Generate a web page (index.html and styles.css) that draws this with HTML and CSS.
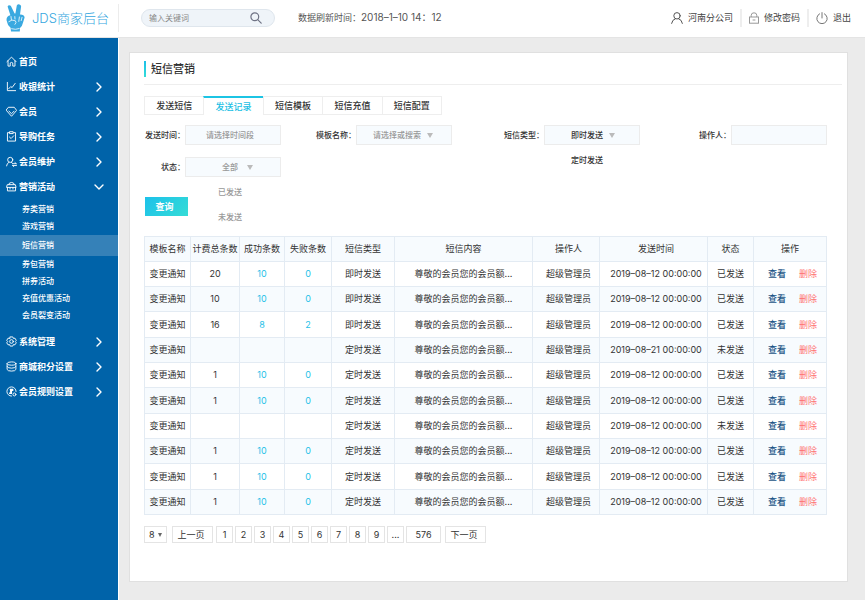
FILE: index.html
```
<!DOCTYPE html>
<html lang="zh-CN">
<head>
    <meta charset="UTF-8">
    <meta name="viewport" content="width=device-width, initial-scale=1.0">
    <title>JDS商家后台 - 短信营销</title>
    <link rel="stylesheet" href="styles.css">
</head>
<body>
    <header class="topbar">
        <a href="#" class="logo">
            <svg width="20" height="28" viewBox="0 0 20 28">
                <path fill="#3aa9e0" d="M1.6 2.6 Q2.6 .2 4.8 1.8 L8.6 9.6 L9.4 9.6 L10.8 1.6 Q12 -.6 14.4 .9 Q15.4 1.8 15 3.2 L14 10.6 Q18 10.4 18.6 13.4 L17.2 18 Q16.4 22 14 24 L13.8 27.4 L5 27.4 L4.6 23.8 Q1.2 21 .6 16.6 Q0 12.2 4.4 11.2 Z"/>
                <path fill="none" stroke="#fff" stroke-width=".8" stroke-linecap="round" d="M5 12.5 L5.4 15.6 M8.8 12.6 L9 15 M2.8 17.6 Q6 14.8 9.4 16.8 Q11 18.4 9 20.4 M13.4 13 L12.8 17.4 M16 13.4 L15.2 16.6 M5.6 24.8 Q9.6 26 13.2 24.6"/>
            </svg>
            <span>JDS商家后台</span>
        </a>
        <form class="search">
            <input type="search" aria-label="搜索" placeholder="输入关键词">
            <button type="button" aria-label="搜索">
                <svg width="12" height="12" viewBox="0 0 12 12" fill="none" stroke="#6f7385" stroke-width="1.2" stroke-linecap="round">
                    <circle cx="4.8" cy="4.8" r="3.9"/>
                    <path d="M7.7 7.7 L11.2 11.2"/>
                </svg>
            </button>
        </form>
        <div class="refresh-time">数据刷新时间：<span>2018–1–10 14：12</span></div>
        <nav class="user-menu">
            <a href="#">
                <svg width="12" height="12" viewBox="0 0 12 12" fill="none" stroke="#555" stroke-width="1" stroke-linecap="round">
                    <circle cx="6" cy="3.8" r="3.2"/>
                    <path d="M.6 11.4 Q1.2 7.6 4.4 6.7 M7.6 6.7 Q10.8 7.6 11.4 11.4"/>
                </svg>
                河南分公司
            </a>
            <a href="#">
                <svg width="10" height="12" viewBox="0 0 10 12" fill="none" stroke="#999" stroke-width="1">
                    <rect x=".5" y="5" width="9" height="6.2"/>
                    <path d="M2.2 5 V3.4 Q2.2 .8 5 .8 Q7.8 .8 7.8 3.4 V5 M3.6 8 H6.4"/>
                </svg>
                修改密码
            </a>
            <a href="#">
                <svg width="12" height="12" viewBox="0 0 12 12" fill="none" stroke="#777" stroke-width="1" stroke-linecap="round">
                    <path d="M3.6 1.8 A5.2 5.2 0 1 0 8.4 1.8 M6 .6 V6"/>
                </svg>
                退出
            </a>
        </nav>
    </header>

    <div class="layout">
        <aside class="sidebar">
            <nav>
                <a href="#" class="nav-item">
                    <svg class="icon" viewBox="0 0 12 12"><path d="M1 6.2 L6 1.2 L11 6.2 M2.2 5.2 V11 H4.6 V7.6 Q6 6.4 7.4 7.6 V11 H9.8 V5.2"/></svg>
                    首页
                </a>
                <a href="#" class="nav-item">
                    <svg class="icon" viewBox="0 0 12 12"><path d="M1.5 1.5 V10.5 H10.5 M3 8.4 L5.2 6 L6.6 7.2 L10 2.6"/></svg>
                    收银统计
                    <svg class="arrow" viewBox="0 0 10 10"><path d="M3 1 L7 5 L3 9"/></svg>
                </a>
                <a href="#" class="nav-item">
                    <svg class="icon" viewBox="0 0 12 12"><path d="M3 1.4 H9 L11.6 4.8 L6 11.2 L.4 4.8 Z M3.2 5.6 L6 8.4 L8.8 5.6"/></svg>
                    会员
                    <svg class="arrow" viewBox="0 0 10 10"><path d="M3 1 L7 5 L3 9"/></svg>
                </a>
                <a href="#" class="nav-item">
                    <svg class="icon" viewBox="0 0 12 12"><path d="M3.6 1.8 H1.6 V11 H10.4 V1.8 H8.4 M4.2 .8 H7.8 V2.8 H4.2 Z M3.8 6.6 L5.6 8.2 L8.4 5.2"/></svg>
                    导购任务
                    <svg class="arrow" viewBox="0 0 10 10"><path d="M3 1 L7 5 L3 9"/></svg>
                </a>
                <a href="#" class="nav-item">
                    <svg class="icon" viewBox="0 0 12 12"><circle cx="4.6" cy="4.2" r="2.8"/><path d="M.6 10.8 Q1 7.8 3.2 6.8 M5.8 6.8 L6.8 7.6 M11 8.4 H7 M11.4 10.4 H7.4 M9.8 7.2 L11.2 8.4 M8.6 11.6 L7.2 10.4"/></svg>
                    会员维护
                    <svg class="arrow" viewBox="0 0 10 10"><path d="M3 1 L7 5 L3 9"/></svg>
                </a>
                <a href="#" class="nav-item">
                    <svg class="icon" viewBox="0 0 12 12"><path d="M3 4 Q3 1.6 6 1.6 Q9 1.6 9 4 M1.8 4 H10.2 L11 7 H1 Z M1.6 7 V10.8 H10.4 V7 M4.4 7 V8.8 M7.6 7 V8.8"/></svg>
                    营销活动
                    <svg class="arrow" viewBox="0 0 10 10"><path d="M1 3 L5 7 L9 3"/></svg>
                </a>
                <div class="submenu">
                    <a href="#">券类营销</a>
                    <a href="#">游戏营销</a>
                    <a href="#" class="active">短信营销</a>
                    <a href="#">券包营销</a>
                    <a href="#">拼券活动</a>
                    <a href="#">充值优惠活动</a>
                    <a href="#">会员裂变活动</a>
                </div>
                <a href="#" class="nav-item">
                    <svg class="icon" viewBox="0 0 12 12"><path d="M4.6 1 H7.4 L8 2.6 L9.8 2.4 L11.2 4.8 L10.2 6 L11.2 7.4 L9.8 9.6 L8 9.4 L7.4 11 H4.6 L4 9.4 L2.2 9.6 L.8 7.4 L1.8 6 L.8 4.8 L2.2 2.4 L4 2.6 Z"/><circle cx="6" cy="6" r="2"/></svg>
                    系统管理
                    <svg class="arrow" viewBox="0 0 10 10"><path d="M3 1 L7 5 L3 9"/></svg>
                </a>
                <a href="#" class="nav-item">
                    <svg class="icon" viewBox="0 0 12 12"><ellipse cx="6" cy="2.8" rx="4.8" ry="1.8"/><path d="M1.2 2.8 V9.2 Q1.6 11 6 11 Q10.4 11 10.8 9.2 V2.8 M1.2 6 Q1.6 7.8 6 7.8 Q10.4 7.8 10.8 6"/></svg>
                    商城积分设置
                    <svg class="arrow" viewBox="0 0 10 10"><path d="M3 1 L7 5 L3 9"/></svg>
                </a>
                <a href="#" class="nav-item">
                    <svg class="icon" viewBox="0 0 12 12"><path d="M11 6 A5 5 0 1 0 6 11"/><path class="solid" d="M4 3 H8 V5.4 H6.6 V8.6 H3.4 V7 H4.6 Z"/><circle cx="9.2" cy="9.2" r="1.6"/></svg>
                    会员规则设置
                    <svg class="arrow" viewBox="0 0 10 10"><path d="M3 1 L7 5 L3 9"/></svg>
                </a>
            </nav>
        </aside>

        <main class="main">
            <section class="card">
                <h1>短信营销</h1>

                <nav class="tabs">
                    <a href="#">发送短信</a>
                    <a href="#" class="active">发送记录</a>
                    <a href="#">短信模板</a>
                    <a href="#">短信充值</a>
                    <a href="#">短信配置</a>
                </nav>

                <form class="filters">
                    <div class="field">
                        <label for="sendTime">发送时间：</label>
                        <input type="text" id="sendTime" class="control" placeholder="请选择时间段">
                    </div>
                    <div class="field">
                        <label for="template">模板名称：</label>
                        <div class="select select-search">
                            <select id="template" class="control"><option>请选择或搜索</option></select>
                        </div>
                    </div>
                    <div class="field">
                        <label for="smsType">短信类型：</label>
                        <div class="select select-type">
                            <select id="smsType" class="control"><option>即时发送</option></select>
                            <ul class="options"><li>定时发送</li></ul>
                        </div>
                    </div>
                    <div class="field">
                        <label for="operator">操作人：</label>
                        <input type="text" id="operator" class="control">
                    </div>
                    <div class="field">
                        <label for="status">状态：</label>
                        <div class="select select-status">
                            <select id="status" class="control"><option>全部</option></select>
                            <ul class="options"><li>已发送</li><li>未发送</li></ul>
                        </div>
                    </div>
                </form>
                <button type="button" class="query-btn">查询</button>

                <table class="records">
                    <colgroup>
                        <col class="col-name">
                        <col class="col-total">
                        <col class="col-ok">
                        <col class="col-fail">
                        <col class="col-type">
                        <col class="col-content">
                        <col class="col-operator">
                        <col class="col-time">
                        <col class="col-status">
                        <col class="col-action">
                    </colgroup>
                    <thead>
                        <tr><th>模板名称</th><th>计费总条数</th><th>成功条数</th><th>失败条数</th><th>短信类型</th><th>短信内容</th><th class="operator">操作人</th><th class="time">发送时间</th><th>状态</th><th>操作</th></tr>
                    </thead>
                    <tbody>
                        <tr><td>变更通知</td><td>20</td><td class="num">10</td><td class="num">0</td><td>即时发送</td><td>尊敬的会员您的会员额...</td><td class="operator">超级管理员</td><td class="time">2019–08–12 00:00:00</td><td>已发送</td><td class="action"><a href="#" class="view">查看</a><a href="#" class="delete">删除</a></td></tr>
                        <tr><td>变更通知</td><td>10</td><td class="num">10</td><td class="num">0</td><td>即时发送</td><td>尊敬的会员您的会员额...</td><td class="operator">超级管理员</td><td class="time">2019–08–12 00:00:00</td><td>已发送</td><td class="action"><a href="#" class="view">查看</a><a href="#" class="delete">删除</a></td></tr>
                        <tr><td>变更通知</td><td>16</td><td class="num">8</td><td class="num">2</td><td>即时发送</td><td>尊敬的会员您的会员额...</td><td class="operator">超级管理员</td><td class="time">2019–08–12 00:00:00</td><td>已发送</td><td class="action"><a href="#" class="view">查看</a><a href="#" class="delete">删除</a></td></tr>
                        <tr><td>变更通知</td><td></td><td></td><td></td><td>定时发送</td><td>尊敬的会员您的会员额...</td><td class="operator">超级管理员</td><td class="time">2019–08–21 00:00:00</td><td>未发送</td><td class="action"><a href="#" class="view">查看</a><a href="#" class="delete">删除</a></td></tr>
                        <tr><td>变更通知</td><td>1</td><td class="num">10</td><td class="num">0</td><td>定时发送</td><td>尊敬的会员您的会员额...</td><td class="operator">超级管理员</td><td class="time">2019–08–12 00:00:00</td><td>已发送</td><td class="action"><a href="#" class="view">查看</a><a href="#" class="delete">删除</a></td></tr>
                        <tr><td>变更通知</td><td>1</td><td class="num">10</td><td class="num">0</td><td>定时发送</td><td>尊敬的会员您的会员额...</td><td class="operator">超级管理员</td><td class="time">2019–08–12 00:00:00</td><td>已发送</td><td class="action"><a href="#" class="view">查看</a><a href="#" class="delete">删除</a></td></tr>
                        <tr><td>变更通知</td><td></td><td></td><td></td><td>定时发送</td><td>尊敬的会员您的会员额...</td><td class="operator">超级管理员</td><td class="time">2019–08–12 00:00:00</td><td>未发送</td><td class="action"><a href="#" class="view">查看</a><a href="#" class="delete">删除</a></td></tr>
                        <tr><td>变更通知</td><td>1</td><td class="num">10</td><td class="num">0</td><td>定时发送</td><td>尊敬的会员您的会员额...</td><td class="operator">超级管理员</td><td class="time">2019–08–12 00:00:00</td><td>已发送</td><td class="action"><a href="#" class="view">查看</a><a href="#" class="delete">删除</a></td></tr>
                        <tr><td>变更通知</td><td>1</td><td class="num">10</td><td class="num">0</td><td>定时发送</td><td>尊敬的会员您的会员额...</td><td class="operator">超级管理员</td><td class="time">2019–08–12 00:00:00</td><td>已发送</td><td class="action"><a href="#" class="view">查看</a><a href="#" class="delete">删除</a></td></tr>
                        <tr><td>变更通知</td><td>1</td><td class="num">10</td><td class="num">0</td><td>定时发送</td><td>尊敬的会员您的会员额...</td><td class="operator">超级管理员</td><td class="time">2019–08–12 00:00:00</td><td>已发送</td><td class="action"><a href="#" class="view">查看</a><a href="#" class="delete">删除</a></td></tr>
                    </tbody>
                </table>

                <div class="pager">
                    <div class="select page-size">
                        <select aria-label="每页条数"><option>8</option></select>
                    </div>
                    <button type="button" class="wide">上一页</button>
                    <button type="button">1</button>
                    <button type="button">2</button>
                    <button type="button">3</button>
                    <button type="button">4</button>
                    <button type="button">5</button>
                    <button type="button">6</button>
                    <button type="button">7</button>
                    <button type="button">8</button>
                    <button type="button">9</button>
                    <button type="button">...</button>
                    <button type="button" class="last">576</button>
                    <button type="button" class="wide">下一页</button>
                </div>
            </section>
        </main>
    </div>
</body>
</html>
```
FILE: styles.css
```
* {
    box-sizing: border-box;
}

body {
    margin: 0;
    min-height: 100vh;
    display: flex;
    flex-direction: column;
    font-family: Inter, "Noto Sans CJK SC", sans-serif;
    font-size: 9px;
    line-height: 14px;
    color: #333;
    background: #fff;
}

a {
    color: inherit;
    text-decoration: none;
}

input,
select,
button {
    font: inherit;
    color: inherit;
    margin: 0;
    padding: 0;
    border: 0;
    background: none;
}

svg {
    flex: none;
}

/* top bar */
.topbar {
    display: flex;
    align-items: center;
    height: 38px;
    padding: 0 14px 2px 0;
    border-bottom: 1px solid #e4e4e4;
}

.logo {
    display: flex;
    align-items: center;
    gap: 6px;
    width: 119px;
    height: 28px;
    padding-left: 6px;
    border-right: 1px solid #ececec;
    font-size: 13px;
    font-weight: 300;
    white-space: nowrap;
    color: #35a7e0;
}

.search {
    display: flex;
    align-items: center;
    width: 134px;
    height: 18px;
    margin-left: 22px;
    padding: 0 12px 0 7px;
    border: 1px solid #dfe6ed;
    border-radius: 9px;
    background: #eff4f9;
}

.search input {
    flex: 1;
    min-width: 0;
    font-size: 8px;
    outline: none;
}

.search input::placeholder {
    color: #888;
}

.search button {
    display: flex;
}

.refresh-time {
    margin-left: 23px;
    color: #555;
}

.refresh-time span {
    font-size: 10px;
}

.user-menu {
    display: flex;
    margin-left: auto;
}

.user-menu a {
    display: flex;
    align-items: center;
    gap: 5px;
    height: 18px;
    padding: 0 7px;
    border-left: 2px solid #eee;
    color: #444;
}

.user-menu a:first-child {
    border-left: 0;
}

.user-menu a:last-child {
    padding-right: 0;
}

.layout {
    flex: 1;
    display: flex;
}

/* sidebar */
.sidebar {
    flex: none;
    width: 118px;
    padding-top: 11px;
    color: #fff;
    background: #0063a9;
}

.nav-item {
    display: flex;
    align-items: center;
    gap: 2px;
    height: 25px;
    padding: 0 14px 0 6px;
    font-weight: 700;
}

.nav-item svg {
    fill: none;
    stroke: #fff;
    stroke-linecap: round;
    stroke-linejoin: round;
}

.icon {
    width: 11px;
    height: 11px;
}

.icon .solid {
    fill: #fff;
    stroke: none;
}

.arrow {
    width: 10px;
    height: 10px;
    margin-left: auto;
    stroke-width: 1.4;
}

.submenu {
    display: flex;
    flex-direction: column;
    padding: 2px 0 5px;
    font-size: 8px;
    font-weight: 500;
    line-height: 17px;
}

.submenu a {
    padding-left: 22px;
}

.submenu .active {
    line-height: 21px;
    background: #3581b8;
}

/* content */
.main {
    flex: 1;
    display: flex;
    min-width: 0;
    padding: 14px 17px 18px 10px;
    border-left: 1px solid #fff;
    background: #ebebeb;
}

.card {
    flex: 1;
    min-width: 0;
    padding: 0 20px 20px 14px;
    border: 1px solid #e0e0e0;
    background: #fff;
}

h1 {
    display: flex;
    align-items: center;
    height: 32px;
    margin: 0 -15px 11px 0;
    border-bottom: 1px solid #eee;
    font-size: 11px;
    font-weight: 500;
}

h1::before {
    content: "";
    width: 2px;
    height: 16px;
    margin-right: 5px;
    background: linear-gradient(#1cbfe8, #33dcd8);
}

.tabs {
    display: flex;
    width: 298px;
    height: 19px;
    border: 1px solid #eee;
}

.tabs a {
    flex: 1;
    line-height: 17px;
    text-align: center;
    font-weight: 500;
    border-left: 1px solid #eee;
}

.tabs a:first-child {
    border-left: 0;
}

.tabs .active {
    margin: -1px 0;
    border-top: 2px solid #1cc4e4;
    color: #1cbfe4;
    background: #fff;
}

.filters {
    display: grid;
    grid-template-columns: 137fr 171fr 188fr 187fr;
    row-gap: 12px;
    margin-top: 10px;
    font-size: 8px;
}

.field {
    display: flex;
    align-items: center;
    justify-content: flex-end;
    font-weight: 500;
}

.control {
    display: block;
    width: 96px;
    height: 20px;
    border: 1px solid #ececec;
    text-align: center;
    color: #999;
    background: #f7fbfe;
}

.control::placeholder {
    color: #999;
}

#sendTime {
    padding-right: 6px;
}

.select {
    position: relative;
}

.select select {
    appearance: none;
}

.select::after {
    content: "";
    position: absolute;
    top: 8px;
    right: 28px;
    border: 3px solid transparent;
    border-top: 5px solid #bbb;
    border-bottom: 0;
    pointer-events: none;
}

.select-search .control {
    padding-right: 14px;
}

.select-search::after {
    right: 19px;
}

.select-type .control,
.select-type .options {
    padding-right: 10px;
    color: #333;
}

.select-type::after {
    right: 25px;
}

.select-status .control,
.select-status .options {
    padding-right: 6px;
}

/* opened list under the drop-down */
.options {
    position: absolute;
    top: 100%;
    left: 0;
    right: 0;
    margin: 3px 0 0;
    padding: 0;
    list-style: none;
    line-height: 25px;
    text-align: center;
    color: #999;
}

.query-btn {
    display: block;
    width: 43px;
    height: 19px;
    margin: 20px 0 20px 1px;
    padding-right: 4px;
    font-weight: 700;
    color: #fff;
    background: linear-gradient(135deg, #1cc1ea, #35dcd6);
}

/* records table */
.records {
    width: 100%;
    table-layout: fixed;
    border-collapse: collapse;
    text-align: center;
}

.records th,
.records td {
    height: 25px;
    padding: 0;
    border: 1px solid #e3ebf3;
    font-weight: 400;
    white-space: nowrap;
}

.records tbody tr:nth-child(3n) td {
    height: 26px;
}

.records th,
.records tbody tr:nth-child(even) td {
    background: #f7fbfe;
}

.records .num {
    color: #26c1e8;
}

.records .operator,
.records .time,
.records .action {
    padding-left: 5px;
}

.view {
    font-weight: 500;
    color: #1d5687;
}

.delete {
    margin-left: 13px;
    color: #ff7070;
}

.col-name { width: 46px; }
.col-total { width: 49px; }
.col-ok { width: 45px; }
.col-fail { width: 47px; }
.col-type { width: 63px; }
.col-operator { width: 67px; }
.col-time { width: 108px; }
.col-status { width: 46px; }
.col-action { width: 73px; }

/* pagination */
.pager {
    display: flex;
    gap: 2px;
    margin-top: 11px;
}

.pager button,
.pager select {
    display: block;
    width: 17px;
    height: 17px;
    border: 1px solid #e4e4e4;
}

.pager .wide {
    width: 41px;
    margin-right: 1px;
    padding-right: 3px;
}

.pager .last {
    width: 35px;
    margin-right: 2px;
}

.pager .page-size {
    margin-right: 3px;
}

.page-size select {
    width: 23px;
    padding-left: 4px;
}

.page-size::after {
    top: 7px;
    right: 5px;
    border-width: 4px 2px 0;
    border-top-color: #666;
}
```
